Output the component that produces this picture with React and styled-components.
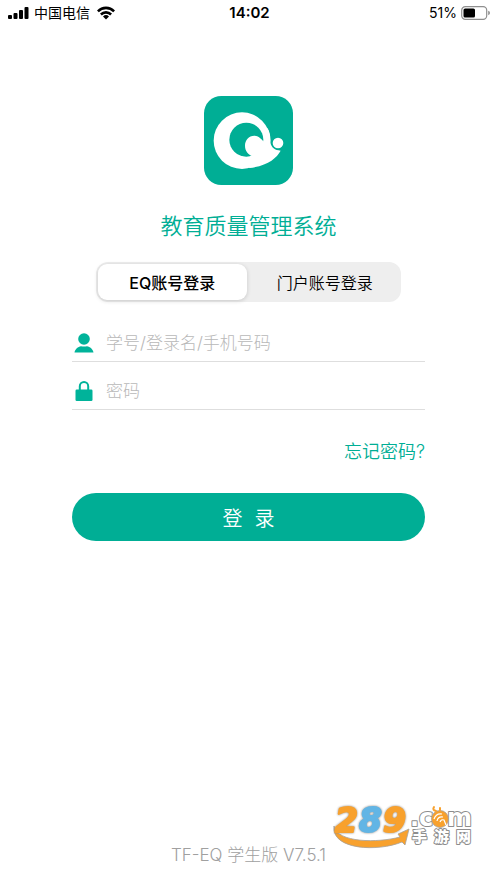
import React, { useState } from 'react';
import styled, { createGlobalStyle } from 'styled-components';

const GlobalStyle = createGlobalStyle`
* {
    box-sizing: border-box;
}
body {
    margin: 0;
    background: #fff;
    font-family: Inter, "Noto Sans CJK SC", sans-serif;
}
button, input {
    font-family: inherit;
}
`;

const SignalIcon = () => (
    <svg width="22" height="14" viewBox="0 0 22 14" aria-hidden="true">
        <rect x="0" y="9" width="4" height="4" rx="1" />
        <rect x="5.5" y="7" width="4" height="6" rx="1" />
        <rect x="11" y="4" width="4" height="9" rx="1" />
        <rect x="16.5" y="1" width="4" height="12" rx="1" />
    </svg>
);

const WifiIcon = () => (
    <svg width="22" height="14" viewBox="-3 0 22 14" aria-hidden="true">
        <path d="M0 4.4 A12.6 12.6 0 0 1 18 4.4 L16.2 6.3 A10 10 0 0 0 1.8 6.3 Z" />
        <path d="M3 7.5 A8.4 8.4 0 0 1 15 7.5 L13.2 9.4 A5.9 5.9 0 0 0 4.8 9.4 Z" />
        <path d="M6 10.5 A4.3 4.3 0 0 1 12 10.5 L9 13.5 Z" />
    </svg>
);

const BatteryIcon = () => (
    <svg width="30" height="14" viewBox="0 0 30 14" aria-hidden="true">
        <rect x="0.7" y="0.7" width="25" height="12.6" rx="3.6" fill="#fff" stroke="#8f8f8f" strokeWidth="1.2" />
        <rect x="2.5" y="2.5" width="11.5" height="9" rx="1.6" />
        <path d="M27.2 4.8 Q29 5.4 29 7 Q29 8.6 27.2 9.2 Z" fill="#8f8f8f" />
    </svg>
);

const AppLogo = () => (
    <svg width="89" height="89" viewBox="0 0 267 267" role="img" aria-label="EQ">
        <rect width="267" height="267" rx="52" fill="#00ae95" />
        <circle cx="114" cy="134" r="85" fill="#fff" />
        <path d="M190 96 C199 110 200 125 199 139 C202 155 212 163 230 164 C217 187 190 210 135 216 L150 170 Z" fill="#fff" />
        <circle cx="127" cy="131" r="51" fill="#00ae95" />
        <path d="M181 137 C171 132 168 119 151 119 C134 119 123 133 123 149 C123 165 133 176 146 181 L170 184 L188 165 Z" fill="#fff" />
        <circle cx="222" cy="141" r="16" fill="#fff" />
    </svg>
);

const UserIcon = () => (
    <svg width="20" height="20" viewBox="0 0 20 20" fill="#00b39a" aria-hidden="true">
        <circle cx="10" cy="6" r="5.8" />
        <path d="M0.5 19.5 C1 16 4 13.8 7 13.2 Q10 13.8 13 13.2 C16 13.8 19 16 19.5 19.5 Z" />
    </svg>
);

const LockIcon = () => (
    <svg width="20" height="20" viewBox="0 0 20 20" aria-hidden="true">
        <path d="M5.8 10 V5.2 A4.2 4.2 0 0 1 14.2 5.2 V10" fill="none" stroke="#00b39a" strokeWidth="2" />
        <rect x="1.5" y="8.5" width="17" height="11.5" rx="1.2" fill="#00b39a" />
    </svg>
);

const SiteMark = () => (
    <svg width="142" height="56" viewBox="0 -14 142 56" role="img" aria-label="289.com 手游网">
        <path d="M1 19 C4 36 45 36 67 30 L65 27 L76 22 L72 38 L69 35 C45 45 -2 43 1 19 Z" fill="#f8a12d" stroke="#a6a19a" strokeWidth="0.8" />
        <MarkDigit x="2" y="25" $color="#f8a12d">2</MarkDigit>
        <MarkDigit x="26" y="25" $color="#62b5e5">8</MarkDigit>
        <MarkDigit x="50" y="25" $color="#f8a12d">9</MarkDigit>
        <MarkDomain>
            <text x="77" y="19">.c</text>
            <text x="114" y="19">m</text>
        </MarkDomain>
        <MarkName>
            <text x="79" y="35">手</text>
            <text x="101" y="35">游</text>
            <text x="123" y="35">网</text>
        </MarkName>
        <circle cx="107" cy="12" r="8.5" fill="#f8a12d" stroke="#a6a19a" strokeWidth="0.8" />
        <path d="M103 4 Q99 3 101 0 M107 3 V1" fill="none" stroke="#f8a12d" strokeWidth="2" strokeLinecap="round" />
        <path d="M101 12 Q103 6 109 7 M104 14 Q105 9 110 10 M107 15 Q108 12 111 13 L113 18" fill="none" stroke="#fff" strokeWidth="1.2" />
    </svg>
);

const tabs = [
    { id: 'eq', label: 'EQ账号登录' },
    { id: 'portal', label: '门户账号登录' },
];

export default function App() {
    const [active, setActive] = useState('eq');

    return (
        <Screen>
            <GlobalStyle />
            <StatusBar>
                <StatusGroup>
                    <SignalIcon />
                    <span>中国电信</span>
                    <WifiIcon />
                </StatusGroup>
                <Clock>14:02</Clock>
                <StatusGroup $end>
                    <span>51%</span>
                    <BatteryIcon />
                </StatusGroup>
            </StatusBar>
            <Main>
                <AppLogo />
                <Title>教育质量管理系统</Title>
                <Segments>
                    {tabs.map((tab) => (
                        <Segment
                            key={tab.id}
                            type="button"
                            aria-pressed={active === tab.id}
                            $active={active === tab.id}
                            onClick={() => setActive(tab.id)}
                        >
                            {tab.label}
                        </Segment>
                    ))}
                </Segments>
                <LoginForm onSubmit={(e) => e.preventDefault()}>
                    <Field>
                        <UserIcon />
                        <FieldInput type="text" aria-label="学号/登录名/手机号码" placeholder="学号/登录名/手机号码" />
                    </Field>
                    <Field>
                        <LockIcon />
                        <FieldInput type="password" aria-label="密码" placeholder="密码" />
                    </Field>
                    <ForgotLink href="#forgot">忘记密码?</ForgotLink>
                    <SubmitButton type="submit">
                        <span>登</span>
                        <span>录</span>
                    </SubmitButton>
                </LoginForm>
            </Main>
            <Footer>TF-EQ 学生版 V7.5.1</Footer>
            <Watermark>
                <SiteMark />
            </Watermark>
        </Screen>
    );
}

const Screen = styled.div`
    position: relative;
    display: flex;
    flex-direction: column;
    min-height: 100vh;
    color: #000;
`;

const StatusBar = styled.header`
    display: grid;
    grid-template-columns: 1fr auto 1fr;
    align-items: center;
    height: 26px;
    padding: 0 6px 0 8px;
    font-size: 14px;
    line-height: 20px;
`;

const StatusGroup = styled.div`
    display: flex;
    align-items: center;
    justify-content: ${(props) => (props.$end ? 'flex-end' : 'flex-start')};
    gap: 4px;
`;

const Clock = styled.time`
    font-size: 15px;
    font-weight: 600;
`;

const Main = styled.main`
    display: flex;
    flex: 1;
    flex-direction: column;
    align-items: center;
    padding: 70px 72px 0;
`;

const Title = styled.h1`
    margin: 25px 0 20px;
    color: #00ae95;
    font-size: 22px;
    font-weight: 350;
    line-height: 32px;
`;

const Segments = styled.div`
    display: grid;
    grid-template-columns: 1fr 1fr;
    gap: 4px;
    width: calc(100% - 48px);
    height: 40px;
    padding: 2px;
    border-radius: 12px;
    background: #eee;
`;

const Segment = styled.button`
    padding: 0;
    border: 0;
    border-radius: 9px;
    background: ${(props) => (props.$active ? '#fff' : 'transparent')};
    box-shadow: ${(props) => (props.$active ? '0 1px 4px rgba(0, 0, 0, 0.16)' : 'none')};
    color: #000;
    font-size: 16px;
    font-weight: ${(props) => (props.$active ? 500 : 350)};
    cursor: pointer;
`;

const LoginForm = styled.form`
    display: flex;
    flex-direction: column;
    width: 100%;
    margin-top: 12px;
`;

const Field = styled.label`
    display: flex;
    align-items: flex-end;
    gap: 12px;
    height: 48px;
    padding: 0 2px 8px;
    border-bottom: 1px solid #dedede;
`;

const FieldInput = styled.input`
    flex: 1;
    min-width: 0;
    height: 20px;
    padding: 0;
    border: 0;
    outline: 0;
    background: transparent;
    font-size: 17px;

    &::placeholder {
        color: #b8b8b8;
        font-weight: 300;
        opacity: 1;
    }
`;

const ForgotLink = styled.a`
    align-self: flex-end;
    margin: 29px 0 28px;
    color: #00ae95;
    font-size: 18px;
    font-weight: 350;
    line-height: 26px;
    text-decoration: none;
`;

const SubmitButton = styled.button`
    display: flex;
    align-items: center;
    justify-content: center;
    gap: 12px;
    height: 48px;
    border: 0;
    border-radius: 24px;
    background: #00ae95;
    color: #fff;
    font-size: 20px;
    font-weight: 350;
    cursor: pointer;
`;

const Footer = styled.footer`
    padding-bottom: 16px;
    color: #a0a0a0;
    font-size: 17px;
    font-weight: 300;
    line-height: 24px;
    text-align: center;
`;

const Watermark = styled.div`
    position: absolute;
    right: 22px;
    bottom: 34px;
    line-height: 0;
`;

const MarkDigit = styled.text`
    font: italic bold 33px "DejaVu Sans", sans-serif;
    fill: ${(props) => props.$color};
    stroke: ${(props) => props.$color};
    stroke-width: 2px;
    stroke-linejoin: round;
    filter: drop-shadow(0 0 1px #8d8780);
`;

const MarkDomain = styled.g`
    font: bold 24px "DejaVu Sans", sans-serif;
    fill: #fff;
    stroke: #8d8d8d;
    stroke-width: 2px;
    stroke-linejoin: round;
    paint-order: stroke;
`;

const MarkName = styled.g`
    font: 900 15px "Noto Sans CJK SC", sans-serif;
    fill: #fff;
    stroke: #8d8d8d;
    stroke-width: 2px;
    stroke-linejoin: round;
    paint-order: stroke;
`;
